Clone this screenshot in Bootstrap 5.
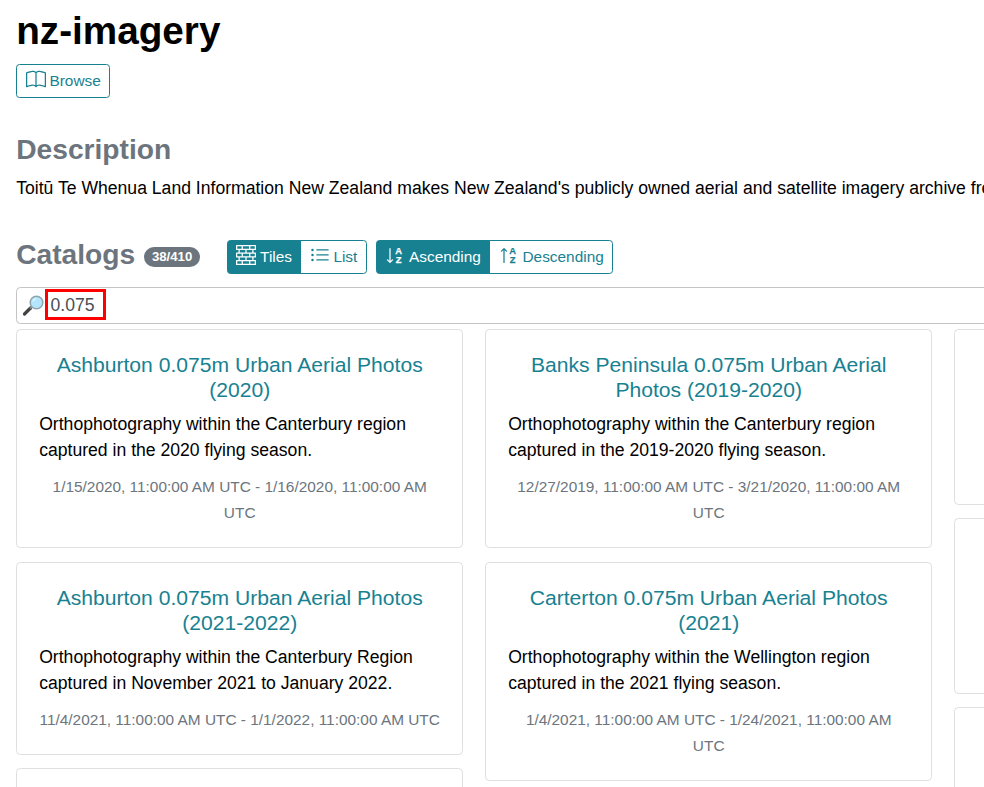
<!DOCTYPE html>
<html lang="en">
<head>
<meta charset="utf-8">
<meta name="viewport" content="width=device-width, initial-scale=1">
<title>nz-imagery</title>
<link rel="stylesheet" href="https://cdn.jsdelivr.net/npm/bootstrap@5.3.0/dist/css/bootstrap.min.css">
<style>
html{font-size:17.6px}
body{font-family:"Liberation Sans",Arial,sans-serif;color:#000;background:#fff;height:787px;overflow:hidden}
.page{width:1417px;padding:0 16.2px}
h1{font-size:38.7px;line-height:47.5px;padding-top:7px;margin-bottom:9.5px}
h2{font-size:28.2px;line-height:34px;color:#6c757d}
.btn-teal{--bs-btn-color:#188191;--bs-btn-border-color:#188191;--bs-btn-active-bg:#188191;--bs-btn-active-border-color:#188191;--bs-btn-active-color:#fff;--bs-btn-border-radius:3.5px;--bs-btn-font-size:15.4px;height:34px;padding:4px 8.4px;line-height:23px}
.btn-teal svg{vertical-align:-2.9px;margin-right:3.6px}
.btn-teal text{font:bold 7.5px "Liberation Sans",Arial,sans-serif;stroke:currentColor;stroke-width:.2px}
.browse{padding:4px 8.7px}
.about{padding-top:34px}
.listing{padding-top:38.8px}
.toolbar{height:34px;margin-bottom:13.4px}
.toolbar h2{padding-bottom:6px}
.toolbar .btn-group{height:34px}
.views{margin-left:26.9px}
.sorting{margin-left:9.2px}
.sorting .btn-teal{padding:4px 8.5px}
.count{font-size:13.2px;background:#6c757d;padding:.25em .6em;line-height:1;height:20px}
.search{height:36.6px;border:1px solid #c4c4c4;border-radius:4.4px;color:#495057;margin-bottom:5px}
.query{border:3px solid #f00;width:61px;height:31px;line-height:26px;padding-left:2.8px;margin:0 0 2px .2px}
.columns-row{gap:22px}
.column{width:447px;flex:none}
.catalog{border:1px solid #dfdfdf;border-radius:4.4px;padding:22px 22px 21px;margin-bottom:13.6px;text-align:center}
.catalog a{display:block;font-size:21.12px;line-height:25px;color:#188191;text-decoration:none;margin-bottom:9px}
.catalog p{text-align:left;line-height:26px;margin-bottom:11px}
.catalog .dates{font-size:15.4px;line-height:26px;color:#6c757d}
.blank{height:175.6px}
</style>
<script src="https://cdn.jsdelivr.net/npm/bootstrap@5.3.0/dist/js/bootstrap.bundle.min.js"></script>
</head>
<body>
<div class="page">
<header>
<h1 class="fw-bold">nz-imagery</h1>
<button class="btn btn-sm btn-teal browse d-block"><svg width="20" height="20" viewBox="0 -0.6 16 16" fill="currentColor"><path d="M1 2.828c.885-.37 2.154-.769 3.388-.893 1.33-.134 2.458.063 3.112.752v9.746c-.935-.53-2.12-.603-3.213-.493-1.18.12-2.37.461-3.287.811zm7.5-.141c.654-.689 1.782-.886 3.112-.752 1.234.124 2.503.523 3.388.893v9.923c-.918-.35-2.107-.692-3.287-.81-1.094-.111-2.278-.039-3.213.492zM8 1.783C7.015.936 5.587.81 4.287.94c-1.514.153-3.042.672-3.994 1.105A.5.5 0 0 0 0 2.5v11a.5.5 0 0 0 .707.455c.882-.4 2.303-.881 3.68-1.02 1.409-.142 2.59.087 3.223.877a.5.5 0 0 0 .78 0c.633-.79 1.814-1.019 3.222-.877 1.378.139 2.8.62 3.681 1.02A.5.5 0 0 0 16 13.5v-11a.5.5 0 0 0-.293-.455c-.952-.433-2.48-.952-3.994-1.105C10.413.809 8.985.936 8 1.783"/></svg>Browse</button>
</header>
<section class="about">
<h2 class="fw-bold mb-2">Description</h2>
<p class="text-nowrap mb-0">Toitū Te Whenua Land Information New Zealand makes New Zealand's publicly owned aerial and satellite imagery archive freely available to use under an open licence.</p>
</section>
<section class="listing">
<div class="toolbar d-flex align-items-center">
<h2 class="fw-bold mb-0">Catalogs</h2>
<span class="count badge rounded-pill ms-2">38/410</span>
<div class="btn-group views">
<button class="btn btn-sm btn-teal active"><svg width="20" height="20" viewBox="0 0 16 16" fill="currentColor"><path d="M0 .5A.5.5 0 0 1 .5 0h15a.5.5 0 0 1 .5.5v3a.5.5 0 0 1-.5.5H14v2h1.5a.5.5 0 0 1 .5.5v3a.5.5 0 0 1-.5.5H14v2h1.5a.5.5 0 0 1 .5.5v3a.5.5 0 0 1-.5.5H.5a.5.5 0 0 1-.5-.5v-3a.5.5 0 0 1 .5-.5H2v-2H.5a.5.5 0 0 1-.5-.5v-3A.5.5 0 0 1 .5 6H2V4H.5a.5.5 0 0 1-.5-.5zM3 4v2h4.5V4zm5.5 0v2H13V4zM3 10v2h4.5v-2zm5.5 0v2H13v-2zM1 1v2h3.5V1zm4.5 0v2h5V1zm6 0v2H15V1zM1 7v2h3.5V7zm4.5 0v2h5V7zm6 0v2H15V7zM1 13v2h3.5v-2zm4.5 0v2h5v-2zm6 0v2H15v-2z"/></svg>Tiles</button>
<button class="btn btn-sm btn-teal"><svg width="20" height="20" viewBox="0 -0.4 16 16" fill="currentColor"><path d="M5 11.5a.5.5 0 0 1 .5-.5h9a.5.5 0 0 1 0 1h-9a.5.5 0 0 1-.5-.5m0-4a.5.5 0 0 1 .5-.5h9a.5.5 0 0 1 0 1h-9a.5.5 0 0 1-.5-.5m0-4a.5.5 0 0 1 .5-.5h9a.5.5 0 0 1 0 1h-9a.5.5 0 0 1-.5-.5m-3 1a1 1 0 1 0 0-2 1 1 0 0 0 0 2m0 4a1 1 0 1 0 0-2 1 1 0 0 0 0 2m0 4a1 1 0 1 0 0-2 1 1 0 0 0 0 2"/></svg>List</button>
</div>
<div class="btn-group sorting">
<button class="btn btn-sm btn-teal active"><svg width="20" height="20" viewBox="0 -0.4 16 16" fill="currentColor"><path fill="none" stroke="currentColor" stroke-linecap="round" stroke-linejoin="round" d="M4 2.5v10.5M2 11.5l2 2 2-2"/><text x="8.1" y="7">A</text><text x="8.5" y="14">Z</text></svg>Ascending</button>
<button class="btn btn-sm btn-teal"><svg width="20" height="20" viewBox="0 -0.4 16 16" fill="currentColor"><path fill="none" stroke="currentColor" stroke-linecap="round" stroke-linejoin="round" d="M4 13.5V2.7M2 4.5l2-2 2 2"/><text x="8.1" y="7">A</text><text x="8.5" y="14">Z</text></svg>Descending</button>
</div>
</div>
<div class="search d-flex align-items-center">
<svg class="ms-1" width="23" height="23" viewBox="0 0 23 23"><path d="M2.5 20l6-6" stroke="#424242" stroke-width="3.2" stroke-linecap="round"/><path d="M8 14.5l2-2" stroke="#858585" stroke-width="2"/><circle cx="14.5" cy="8.5" r="6.3" fill="#b3e5fc" stroke="#90a4ae" stroke-width="1.5"/><path d="M11 7.5a4 4 0 0 1 3-3" stroke="#e1f5fe" stroke-width="1.5" fill="none"/></svg>
<div class="query">0.075</div>
</div>
</section>
<main class="columns-row d-flex">
<div class="column">
<article class="catalog"><a href="#">Ashburton 0.075m Urban Aerial Photos (2020)</a><p>Orthophotography within the Canterbury region captured in the 2020 flying season.</p><div class="dates">1/15/2020, 11:00:00 AM UTC - 1/16/2020, 11:00:00 AM UTC</div></article>
<article class="catalog"><a href="#">Ashburton 0.075m Urban Aerial Photos (2021-2022)</a><p>Orthophotography within the Canterbury Region captured in November 2021 to January 2022.</p><div class="dates">11/4/2021, 11:00:00 AM UTC - 1/1/2022, 11:00:00 AM UTC</div></article>
<article class="catalog blank"></article>
</div>
<div class="column">
<article class="catalog"><a href="#">Banks Peninsula 0.075m Urban Aerial Photos (2019-2020)</a><p>Orthophotography within the Canterbury region captured in the 2019-2020 flying season.</p><div class="dates">12/27/2019, 11:00:00 AM UTC - 3/21/2020, 11:00:00 AM UTC</div></article>
<article class="catalog"><a href="#">Carterton 0.075m Urban Aerial Photos (2021)</a><p>Orthophotography within the Wellington region captured in the 2021 flying season.</p><div class="dates">1/4/2021, 11:00:00 AM UTC - 1/24/2021, 11:00:00 AM UTC</div></article>
</div>
<div class="column">
<article class="catalog blank"></article>
<article class="catalog blank"></article>
<article class="catalog blank"></article>
</div>
</main>
</div>
</body>
</html>
